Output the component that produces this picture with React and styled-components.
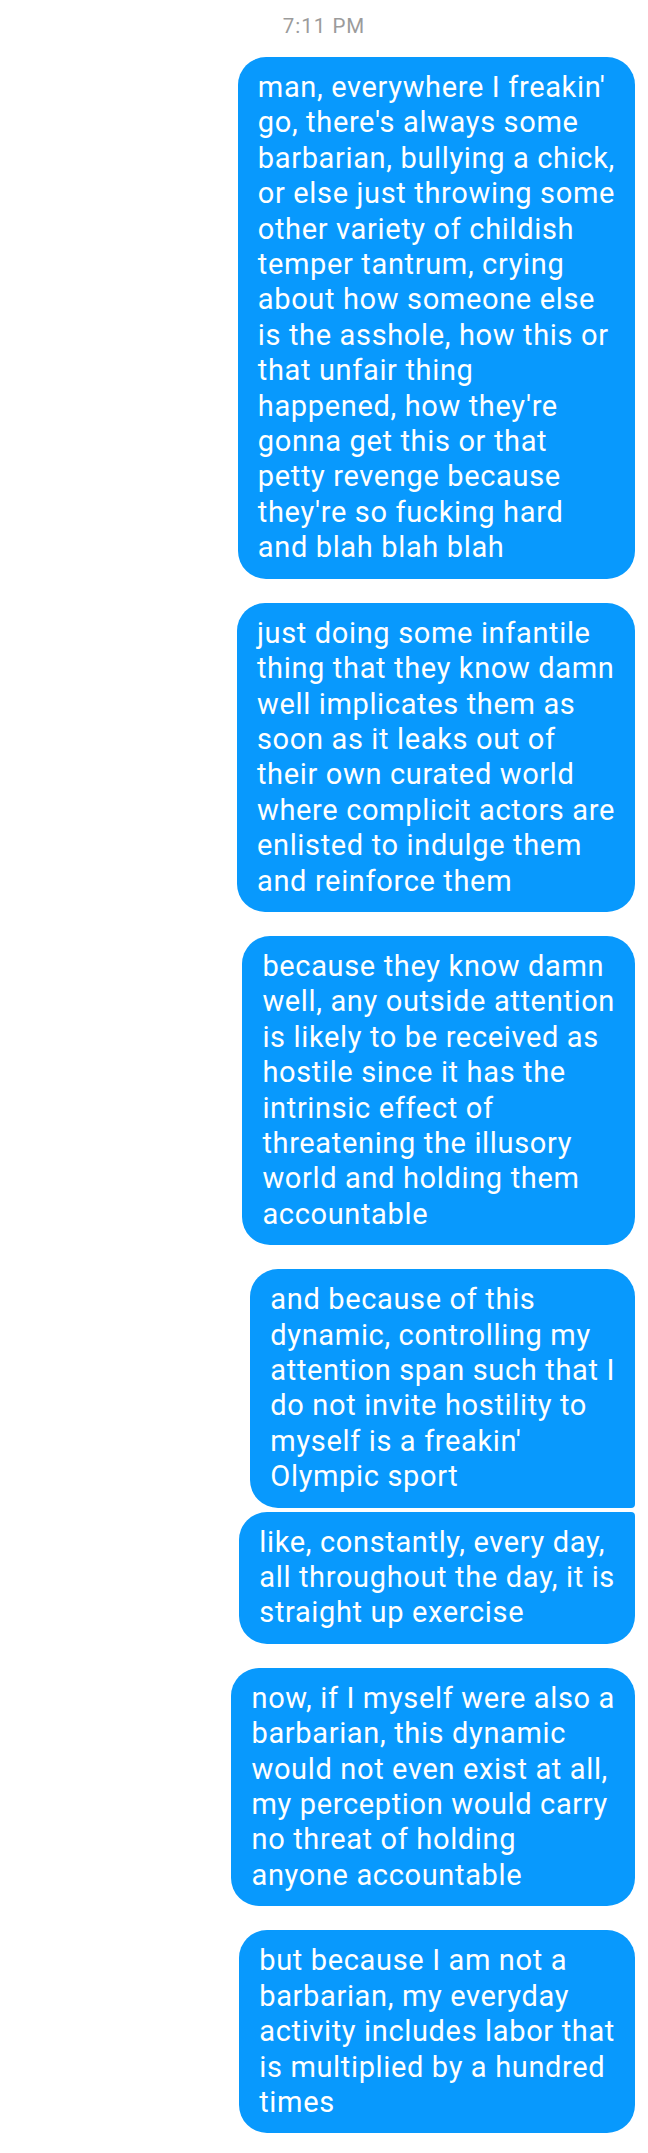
import React from 'react'
import styled, { createGlobalStyle } from 'styled-components'

const GlobalStyle = createGlobalStyle`
    body {
        margin: 0;
        background: #ffffff;
        font-family: Roboto, "Liberation Sans", sans-serif;
    }
`

const groups = [
    [
        [
            "man, everywhere I freakin'",
            "go, there's always some",
            "barbarian, bullying a chick,",
            "or else just throwing some",
            "other variety of childish",
            "temper tantrum, crying",
            "about how someone else",
            "is the asshole, how this or",
            "that unfair thing",
            "happened, how they're",
            "gonna get this or that",
            "petty revenge because",
            "they're so fucking hard",
            "and blah blah blah",
        ],
    ],
    [
        [
            "just doing some infantile",
            "thing that they know damn",
            "well implicates them as",
            "soon as it leaks out of",
            "their own curated world",
            "where complicit actors are",
            "enlisted to indulge them",
            "and reinforce them",
        ],
    ],
    [
        [
            "because they know damn",
            "well, any outside attention",
            "is likely to be received as",
            "hostile since it has the",
            "intrinsic effect of",
            "threatening the illusory",
            "world and holding them",
            "accountable",
        ],
    ],
    [
        [
            "and because of this",
            "dynamic, controlling my",
            "attention span such that I",
            "do not invite hostility to",
            "myself is a freakin'",
            "Olympic sport",
        ],
        [
            "like, constantly, every day,",
            "all throughout the day, it is",
            "straight up exercise",
        ],
    ],
    [
        [
            "now, if I myself were also a",
            "barbarian, this dynamic",
            "would not even exist at all,",
            "my perception would carry",
            "no threat of holding",
            "anyone accountable",
        ],
    ],
    [
        [
            "but because I am not a",
            "barbarian, my everyday",
            "activity includes labor that",
            "is multiplied by a hundred",
            "times",
        ],
    ],
]

const place = (index, count) => {
    if (count === 1) return 'single'
    if (index === 0) return 'first'
    if (index === count - 1) return 'last'
    return 'middle'
}

const corners = {
    single: '28px',
    first: '28px 28px 4px 28px',
    middle: '28px 4px 4px 28px',
    last: '28px 4px 28px 28px',
}

const App = () => {
    return (
        <Screen>
            <GlobalStyle />
            <Timestamp>7:11 PM</Timestamp>
            <Thread>
                {groups.map((group, g) =>
                    <Group key={g}>
                        {group.map((lines, i) =>
                            <Bubble key={i} $place={place(i, group.length)}>
                                {lines.map((line, l) => <Line key={l}>{line}</Line>)}
                            </Bubble>
                        )}
                    </Group>
                )}
            </Thread>
        </Screen>
    )
}

export default App


const Screen = styled.div`
    width: 648px;
    min-height: 2153px;
    box-sizing: border-box;
    padding: 14px 13px 21px 0;
    display: flex;
    flex-direction: column;
`

const Timestamp = styled.div`
    align-self: center;
    margin-left: 13px;
    font-size: 20.5px;
    letter-spacing: 1px;
    line-height: 24px;
    color: #9b9b9b;
    margin-bottom: 19px;
`

const Thread = styled.div`
    display: flex;
    flex-direction: column;
    align-items: flex-end;
    gap: 24px;
`

const Group = styled.div`
    display: flex;
    flex-direction: column;
    align-items: flex-end;
    gap: 4px;
`

const Bubble = styled.div`
    background: #0899fd;
    color: #ffffff;
    border-radius: ${props => corners[props.$place]};
    padding: 13px 20px;
    font-size: 29px;
    letter-spacing: 0.65px;
    line-height: 35.4px;
`

const Line = styled.div`
    white-space: pre;
`
